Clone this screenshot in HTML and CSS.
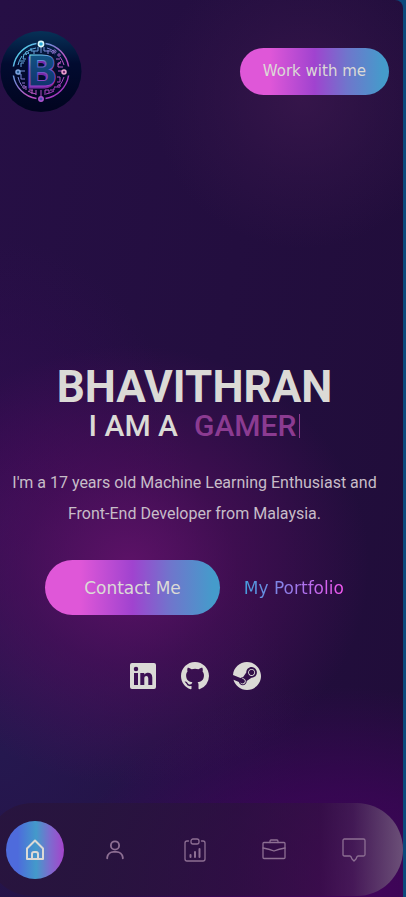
FILE: index.html
```
<!DOCTYPE html>
<html lang="en">
<head>
<meta charset="utf-8">
<meta name="viewport" content="width=device-width, initial-scale=1">
<title>Bhavithran</title>
<link rel="stylesheet" href="styles.css">
</head>
<body>
<div class="page">
  <header class="header">
    <a class="logo" href="#home" aria-label="Home">
      <svg viewBox="0 0 82 82">
        <defs>
          <linearGradient id="disc" x1="0" y1="0" x2="0" y2="1"><stop offset="0" stop-color="#063157"/><stop offset=".4" stop-color="#020b30"/><stop offset="1" stop-color="#01041f"/></linearGradient>
          <linearGradient id="ring" gradientUnits="userSpaceOnUse" x1="17" y1="18" x2="65" y2="64"><stop offset="0" stop-color="#4bdced"/><stop offset=".35" stop-color="#7a83d6"/><stop offset=".6" stop-color="#bd58c2"/><stop offset="1" stop-color="#9b2fbd"/></linearGradient>
          <linearGradient id="edge" gradientUnits="userSpaceOnUse" x1="30" y1="25" x2="44" y2="58"><stop offset="0" stop-color="#70e4ef"/><stop offset=".35" stop-color="#5a69c8"/><stop offset="1" stop-color="#a336c4"/></linearGradient>
          <linearGradient id="face" x1="0" y1="0" x2="0" y2="1"><stop offset="0" stop-color="#125a88"/><stop offset="1" stop-color="#102a67"/></linearGradient>
        </defs>
        <circle cx="41" cy="41.500" r="40.500" fill="url(#disc)"/>
        <g fill="none" stroke="url(#ring)">
          <path d="M45.500 13.400A28 28 0 0 1 68.600 36.500M68.600 45.500A28 28 0 0 1 45.500 68.600M36.500 68.600A28 28 0 0 1 13.400 45.500M13.400 36.500A28 28 0 0 1 36.500 13.400" stroke-width="1.500"/>
          <path d="M47 18A24 24 0 0 1 55 22M60 27A24 24 0 0 1 64 35M64 47A24 24 0 0 1 59 56M54 61A24 24 0 0 1 46 64M36 64A24 24 0 0 1 28 61M22 56A24 24 0 0 1 18 47M18 35A24 24 0 0 1 22 26M28 21A24 24 0 0 1 36 18" stroke-width="1"/>
          <path d="M41 17v6M38 17v4h-7v-3M44 17v4h7l3 4M28 24h-4l-1 5h3M56 29h4M24 33h-3v4M18 41h7M18 44h3v5h4M25 53h-3M26 56v4M32 60v4M36 60v5M41 66v-6M45 65v-5h4v3M54 60v-3h4M57 52h3v-5h-3M64 41h-6M63 37h-5v-4h3M20 31h5M61 31l-3 4M34 24v-3M48 24v-4M29 60h4M50 60h4" stroke-width="1"/>
          <circle cx="27" cy="23" r="1.500"/><circle cx="54.500" cy="21.500" r="1.500"/><circle cx="59" cy="25" r="1.200"/><circle cx="24" cy="57" r="1.300"/><circle cx="59" cy="56" r="1.300"/>
        </g>
        <circle cx="41" cy="14" r="2.600" fill="#2aa8d8" stroke="#d8f6fa" stroke-width="1.600"/>
        <circle cx="64" cy="42" r="2" fill="#76307c" stroke="#eba3ce" stroke-width="1.500"/>
        <circle cx="41" cy="69" r="2.200" fill="#4a4cb0" stroke="#b052ce" stroke-width="1.500"/>
        <circle cx="18" cy="42" r="2" fill="#2a5e95" stroke="#7fa5df" stroke-width="1.500"/>
        <rect x="27" y="24" width="27" height="34" fill="#030c2f"/>
        <text class="logo-letter-back" x="41" y="58">B</text>
        <text class="logo-letter" x="42" y="56">B</text>
      </svg>
    </a>
    <a class="pill pill-small" href="#contact">Work with me</a>
  </header>

  <main class="hero" id="home">
    <h1 class="name">BHAVITHRAN</h1>
    <p class="role"><span>I AM A</span><span class="typed">GAMER<span class="cursor"></span></span></p>
    <p class="bio">I'm a 17 years old Machine Learning Enthusiast and Front-End Developer from Malaysia.</p>
    <div class="actions">
      <a class="pill pill-large" href="#contact">Contact Me</a>
      <a class="portfolio" href="#work">My Portfolio</a>
    </div>
    <div class="socials">
      <a href="#linkedin" aria-label="LinkedIn"><svg viewBox="0 0 28 28"><path fill="currentColor" fill-rule="evenodd" d="M3 1h22a2 2 0 0 1 2 2v22a2 2 0 0 1-2 2H3a2 2 0 0 1-2-2V3a2 2 0 0 1 2-2ZM5 11v12h4V11ZM7 4.800a2.200 2.200 0 1 0 0 4.500 2.200 2.200 0 0 0 0-4.500ZM11.300 11v12h4v-6.500c0-3.300 4-3.200 4 0V23h4v-7.500c0-5.400-5.800-5.800-8-2.800V11Z"/></svg></a>
      <a href="#github" aria-label="GitHub"><svg viewBox="0 0 16 16"><path fill="currentColor" d="M8 0C3.580 0 0 3.580 0 8c0 3.540 2.290 6.530 5.470 7.590.4.070.55-.17.55-.38 0-.19-.01-.82-.01-1.490-2.010.37-2.530-.49-2.690-.94-.09-.23-.48-.94-.82-1.130-.28-.15-.68-.52-.01-.53.63-.01 1.080.58 1.230.82.72 1.210 1.870.87 2.330.66.07-.52.28-.87.51-1.070-1.780-.2-3.640-.89-3.640-3.950 0-.87.31-1.590.82-2.150-.08-.2-.36-1.020.08-2.120 0 0 .67-.21 2.200.82a7.600 7.600 0 0 1 4 0c1.530-1.040 2.200-.82 2.200-.82.44 1.100.16 1.920.08 2.120.51.56.82 1.270.82 2.150 0 3.070-1.870 3.750-3.650 3.950.29.25.54.73.54 1.480 0 1.070-.01 1.930-.01 2.200 0 .21.15.46.55.38A8 8 0 0 0 16 8c0-4.420-3.580-8-8-8Z"/></svg></a>
      <a href="#steam" aria-label="Steam"><svg viewBox="0 0 496 496"><path transform="translate(0 -8)" fill="currentColor" d="M496 256c0 137-111.200 248-248.400 248-113.800 0-209.600-76.300-239-180.400l95.200 39.300c6.400 32.100 34.900 56.400 68.900 56.400 39.200 0 71.900-32.400 70.200-73.500l84.500-60.200c52.100 1.300 95.800-40.900 95.800-93.500 0-51.600-42-93.500-93.700-93.500s-93.700 42-93.700 93.500v1.200L176.600 279c-15.500-.9-30.700 3.400-43.500 12.100L0 236.100C10.200 108.400 117.100 8 247.600 8 384.800 8 496 119 496 256zM155.700 384.300l-30.500-12.600a52.790 52.790 0 0 0 27.200 25.800c26.900 11.200 57.800-1.600 69-28.400 5.400-13 5.500-27.300.1-40.300-5.400-13-15.500-23.200-28.500-28.600-12.900-5.400-26.700-5.200-38.900-.6l31.500 13c19.800 8.200 29.200 30.900 20.900 50.700-8.300 19.900-31 29.200-50.800 21zm173.800-129.900c-34.400 0-62.400-28-62.400-62.300s28-62.300 62.400-62.300 62.400 28 62.400 62.300-27.900 62.300-62.400 62.300zm.1-15.600c25.900 0 46.900-21 46.900-46.800 0-25.900-21-46.800-46.900-46.800s-46.900 21-46.900 46.800c.1 25.800 21.100 46.800 46.900 46.800z"/></svg></a>
    </div>
  </main>

  <nav class="nav" aria-label="Sections">
    <a class="nav-item active" href="#home" aria-label="Home"><svg viewBox="0 0 24 24"><path d="m4 10.500 8-8 8 8V21H4ZM9 21v-5q0-2 2-2h2q2 0 2 2v5"/></svg></a>
    <a class="nav-item" href="#about" aria-label="About"><svg viewBox="0 0 24 24"><circle cx="12" cy="7" r="4.500"/><path d="M3.500 21v-1a7 7 0 0 1 7-6h3a7 7 0 0 1 7 6v1"/></svg></a>
    <a class="nav-item" href="#services" aria-label="Services"><svg viewBox="0 0 24 24"><path d="M5.500 3H4Q2 3 2 5v16q0 2 2 2h16q2 0 2-2V5q0-2-2-2h-1.500"/><rect x="8" y="1" width="8" height="5" rx="2"/><path class="bars" d="M7.500 17v2M12 14v5M16.500 11v8"/></svg></a>
    <a class="nav-item" href="#work" aria-label="Work"><svg viewBox="0 0 24 24"><rect x="1" y="4.500" width="22" height="16" rx="1"/><path d="M8 4.500V3.500q0-1.500 1-1.500h6q1 0 1 1.500v1M1 10q6 1 11 3 5-2 11-3"/></svg></a>
    <a class="nav-item" href="#contact" aria-label="Contact"><svg viewBox="0 0 24 24"><path d="M2.500 1h19q1.500 0 1.500 1.500v14q0 1.500-1.500 1.500H16q-1 0-2 3l-2 2-2-2q-1-3-2-3H2.500Q1 18 1 16.500v-14Q1 1 2.500 1Z"/></svg></a>
  </nav>
</div>
</body>
</html>
```
FILE: styles.css
```
* { box-sizing: border-box; }
body {
  margin: 0;
  background: #0c497c;
  color: #dbdad6;
  font-family: Roboto, sans-serif;
}
a { color: inherit; text-decoration: none; }
svg { display: block; width: 100%; }
.page {
  display: flex;
  flex-direction: column;
  min-height: 100vh;
  margin-right: 3px;
  overflow: hidden;
  border-radius: 0 8px 0 0;
  background:
    radial-gradient(circle at 75% 11%, #3a174dcc 0, #3a174d55 80px, #3a174d00 150px),
    radial-gradient(ellipse 240px 220px at 32% 63%, #5c1267 0, #560e6088 45%, #4a085600 100%),
    radial-gradient(ellipse 280px 210px at 85% 100%, #44045c 0, #40045caa 50%, #40045c00 100%),
    radial-gradient(ellipse 300px 300px at 0 84%, #25184f 0, #25184f00 100%),
    radial-gradient(ellipse 200px 300px at 0 60%, #330c52 0, #310c5000 100%),
    linear-gradient(100deg, #260f45, #200d39);
}
.header {
  display: flex;
  justify-content: space-between;
  align-items: center;
  padding: 30px 14px 0 0;
}
.logo { width: 82px; }
.logo-letter, .logo-letter-back {
  font-family: "DejaVu Sans", sans-serif;
  font-size: 42px;
  font-weight: 700;
  text-anchor: middle;
}
.logo-letter { fill: url(#face); stroke: url(#edge); stroke-width: 1px; }
.logo-letter-back { fill: #792aa6; stroke: #792aa6; stroke-width: 1px; }
.pill {
  display: flex;
  align-items: center;
  justify-content: center;
  border-radius: 32px;
  background: linear-gradient(90deg, #df57d8 20%, #a043cf 50%, #6f76cc 72%, #459bcb 96%);
  font-family: "DejaVu Sans", sans-serif;
}
.pill-small { height: 47px; padding: 0 23px; font-size: 15px; }
.pill-large { height: 55px; padding: 0 39px; font-size: 17px; }
.hero {
  flex: 1;
  display: flex;
  flex-direction: column;
  align-items: center;
  justify-content: flex-end;
  padding: 0 14px 113px 0;
  text-align: center;
}
.name { margin: 0; font-size: 44px; line-height: 44px; font-weight: 700; }
.role {
  display: flex;
  gap: 16px;
  margin: 0 0 24px;
  font-size: 30px;
  line-height: 34px;
  font-weight: 500;
}
.typed { display: flex; align-items: center; gap: 3px; color: #8b3b91; }
.cursor { width: 1px; height: 24px; background: currentColor; }
.bio { margin: 0 0 31px; padding: 0 10px; font-size: 16px; line-height: 31px; color: #c7bdc8; }
.actions { display: flex; align-items: center; gap: 24px; margin-bottom: 47px; }
.portfolio {
  background: linear-gradient(90deg, #459edc, #ae72ed 60%, #f456ef);
  background-clip: text;
  color: transparent;
  font-family: "DejaVu Sans", sans-serif;
  font-size: 17px;
}
.socials { display: flex; gap: 24px; }
.socials a { width: 28px; }
.nav {
  display: flex;
  align-items: center;
  justify-content: space-between;
  height: 93px;
  margin: 0 0 1px -14px;
  padding: 0 20px;
  border-radius: 47px;
  background: linear-gradient(90deg, #28143de8, #28143de0 25%, #2a123caa 60%, #33133f88 80%, #49295588 88%, #735b7ddd);
}
.nav-item {
  display: flex;
  align-items: center;
  justify-content: center;
  width: 58px;
  height: 58px;
  border-radius: 50%;
  color: #8d6f93;
}
.nav-item svg {
  width: 24px;
  overflow: visible;
  fill: none;
  stroke: currentColor;
  stroke-width: 1.3;
  stroke-linejoin: round;
  stroke-linecap: round;
}
.nav-item:nth-child(2) svg { stroke-width: 2px; width: 22px; }
.nav-item .bars { stroke-width: 2px; }
.nav-item.active {
  background: linear-gradient(90deg, #4e6bdc 20%, #439aca 52%, #7e6bcf 76%, #a544cb);
  color: #dbdad6;
}
.nav-item.active svg { stroke-width: 2px; }
```
